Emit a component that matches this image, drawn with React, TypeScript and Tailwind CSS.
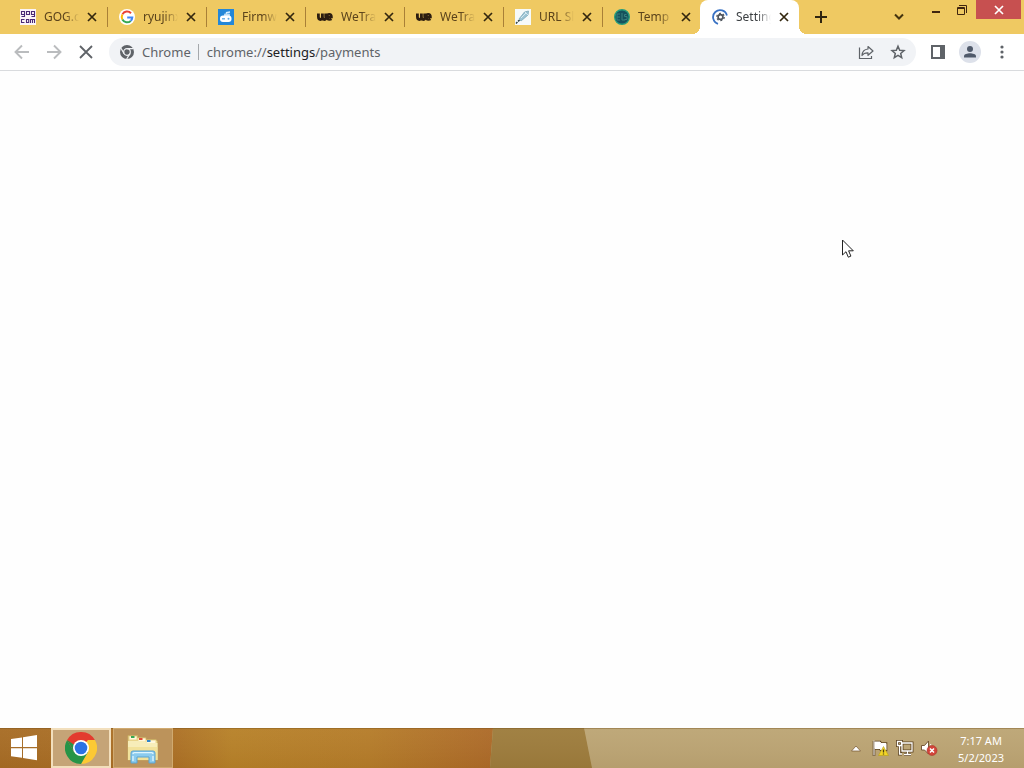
import type { ReactNode } from "react";

function GogIcon() {
  return (
    <svg viewBox="0 0 16 16" className="size-4">
      <rect width="16" height="16" fill="#fbf4f8" />
      <g fill="none" stroke="#4b2a76" strokeWidth="1.100">
        <path d="M4.500 5.500h-3v-3h3v5h-3M6.500 2.500h3v3h-3zM14.500 5.500h-3v-3h3v5h-3" />
        <path d="M4.500 10.500h-3v3h3M6.500 10.500h2.200v3H6.500zM10.500 14v-3.500h4V14M12.500 10.500V14" />
      </g>
    </svg>
  );
}

function GoogleIcon() {
  return (
    <svg viewBox="0 0 16 16" className="size-4">
      <circle cx="8" cy="8" r="8" fill="#fff" />
      <g fill="none" strokeWidth="2">
        <path d="M12 4.200A5.300 5.300 0 0 0 3.400 5.400" stroke="#ea4335" />
        <path d="M3.400 5.400a5.300 5.300 0 0 0 0 5.200" stroke="#fbbc05" />
        <path d="M3.400 10.600a5.300 5.300 0 0 0 8.300 1.300" stroke="#34a853" />
        <path d="M11.700 11.900A5.300 5.300 0 0 0 13.300 8.400H8.200" stroke="#4285f4" />
      </g>
    </svg>
  );
}

function FirmwareIcon() {
  return (
    <svg viewBox="0 0 16 16" className="size-4">
      <rect width="16" height="16" fill="#2487d8" />
      <path d="M8.500 5V3.500L12 3" stroke="#d7efff" strokeWidth="1.300" fill="none" />
      <rect x="6" y="4.500" width="6" height="3" rx="1" fill="#b9dcf5" />
      <rect x="2" y="6.500" width="11.500" height="6.500" rx="3" fill="#fff" />
      <path d="M4 9.800h3" stroke="#5aa8e4" strokeWidth="1.300" />
      <circle cx="10.500" cy="9.800" r="1" fill="#5aa8e4" />
    </svg>
  );
}

function WeIcon() {
  return (
    <svg viewBox="0 0 16 16" className="size-4" fill="none" stroke="#2c1d10" strokeWidth="2.800">
      <path d="M1.400 4.500v3q0 3 2 3t2-3v-3M5.400 7.500q0 3 2 3t1.300-3v-3" />
      <path d="M10.300 8h4.300q0-2.800-2.300-2.800-2.500 0-2.500 2.800 0 2.600 2.700 2.600 1.200 0 2-.600" strokeWidth="2.300" />
    </svg>
  );
}

function LinkIcon() {
  return (
    <svg viewBox="0 0 16 16" className="size-4">
      <rect width="16" height="16" fill="#f6fafa" />
      <path d="M1 14.500 5 10.500" stroke="#293b3d" strokeWidth="1.500" strokeDasharray="2 1" />
      <path d="m4 10 2 2 7-6 .5-4-4 1z" fill="#9cc4d4" stroke="#7ba8b9" strokeWidth=".8" />
      <path d="m6 9 5-5M10 3l3 3" stroke="#d5e9f0" />
    </svg>
  );
}

function TempIcon() {
  return (
    <svg viewBox="0 0 16 16" className="size-4">
      <circle cx="8" cy="8" r="7.300" fill="#16525d" stroke="#269c7d" strokeWidth="1.400" />
      <path d="M6 5H3v6h3M3 8h3M8 4v7h3M12.500 5.500H10.500v2h2.500v3h-2.500" fill="none" stroke="#38817f" />
    </svg>
  );
}

function LoadingSettingsIcon() {
  return (
    <svg viewBox="0 0 16 16" className="size-4" fill="none">
      <path d="M6 14.800A7 7 0 1 1 14.900 6.500" stroke="#3972c4" strokeWidth="1.800" />
      <circle cx="8.500" cy="8" r="2.400" stroke="#50565e" strokeWidth="1.700" />
      <circle cx="8.500" cy="8" r="3.700" stroke="#50565e" strokeWidth="1.300" strokeDasharray="1.937 1.937" />
    </svg>
  );
}

function Cross({ className }: { className: string }) {
  return (
    <svg viewBox="0 0 16 16" className={className} fill="none" stroke="currentColor">
      <path d="m4 4 8 8M12 4l-8 8" />
    </svg>
  );
}

type TabInfo = { title: string; icon: ReactNode; active?: boolean };

const tabs: TabInfo[] = [
  { title: "GOG.c", icon: <GogIcon /> },
  { title: "ryujinx", icon: <GoogleIcon /> },
  { title: "Firmw", icon: <FirmwareIcon /> },
  { title: "WeTra", icon: <WeIcon /> },
  { title: "WeTra", icon: <WeIcon /> },
  { title: "URL Sl", icon: <LinkIcon /> },
  { title: "Temp", icon: <TempIcon /> },
  { title: "Setting", icon: <LoadingSettingsIcon />, active: true },
];

function Tab({ title, icon, active }: TabInfo) {
  return (
    <div
      className={
        active
          ? "relative -ml-px flex h-full w-[99px] items-center rounded-t-lg bg-white pl-3 text-[#3c4043]"
          : "relative flex h-full w-[99px] items-center pl-3 text-[#5b431b]"
      }
    >
      {active && (
        <>
          <span className="absolute bottom-0 -left-2 size-2 bg-[radial-gradient(circle_at_0_0,transparent_8px,white_8px)]" />
          <span className="absolute -right-2 bottom-0 size-2 bg-[radial-gradient(circle_at_100%_0,transparent_8px,white_8px)]" />
        </>
      )}
      <button className="flex items-center gap-2">
        {icon}
        <span className="w-[35px] text-left text-xs whitespace-nowrap mask-[linear-gradient(to_right,black_60%,transparent)]">
          {title}
        </span>
      </button>
      <button aria-label={"Close " + title} className="ml-[5px] text-[#33270f]">
        <Cross className="size-4 stroke-[1.7]" />
      </button>
      {!active && title !== "Temp" && <span className="absolute -right-px h-5 w-px bg-[#a98037]" />}
    </div>
  );
}

function TabStrip() {
  return (
    <header className="flex h-[34px] items-center justify-between bg-[#efc962]">
      <div className="flex h-full items-center pl-2">
        {tabs.map((tab, i) => (
          <Tab key={i} {...tab} />
        ))}
        <button aria-label="New tab" className="ml-3.5 text-[#302510]">
          <svg viewBox="0 0 16 16" className="size-4" stroke="currentColor" strokeWidth="2">
            <path d="M8 2v12M2 8h12" />
          </svg>
        </button>
      </div>
      <div className="flex h-full items-start">
        <button aria-label="Search tabs" className="mt-2 mr-4 text-[#44340f]">
          <svg viewBox="0 0 16 16" className="size-4" fill="none" stroke="currentColor" strokeWidth="2">
            <path d="m4 6.500 4 4 4-4" />
          </svg>
        </button>
        <button aria-label="Minimize" className="flex h-[19px] w-[26px] items-center justify-center text-[#40250f]">
          <svg viewBox="0 0 16 16" className="size-4">
            <path d="M4 9h8v2H4z" fill="currentColor" />
          </svg>
        </button>
        <button aria-label="Restore" className="mr-px flex h-[19px] w-[26px] items-center justify-center text-[#40250f]">
          <svg viewBox="0 0 16 16" className="size-4" fill="none" stroke="currentColor">
            <path d="M3.500 5.500h7v7h-7zM3 6.500h8M5 3.500h7.500V11" />
          </svg>
        </button>
        <button aria-label="Close window" className="mr-[3px] flex h-[19px] w-[45px] items-center justify-center bg-[#c75050] text-white">
          <Cross className="size-4 stroke-[1.7]" />
        </button>
      </div>
    </header>
  );
}

function ArrowIcon({ className }: { className: string }) {
  return (
    <svg viewBox="0 0 16 16" className={className} fill="none" stroke="currentColor" strokeWidth="1.900">
      <path d="M15 8H2M8 1.500 1.500 8 8 14.500" />
    </svg>
  );
}

function Toolbar() {
  return (
    <nav className="flex h-[37px] items-center border-b border-[#d9dbde] bg-white pr-3.5 pl-3.5 text-[#5f6368]">
      <div className="flex w-[95px] items-center gap-4">
        <button aria-label="Back" className="text-[#babcbe]">
          <ArrowIcon className="size-4" />
        </button>
        <button aria-label="Forward" className="text-[#babcbe]">
          <ArrowIcon className="size-4 rotate-180" />
        </button>
        <button aria-label="Stop loading">
          <svg viewBox="0 0 16 16" className="size-4" stroke="currentColor" strokeWidth="1.800">
            <path d="m2 2 12 12M14 2 2 14" />
          </svg>
        </button>
      </div>
      <div className="flex h-7 flex-1 items-center rounded-full bg-[#f1f3f6] px-2.5">
        <svg viewBox="0 0 16 16" className="size-4 shrink-0">
          <circle cx="8" cy="8" r="7" fill="#5f6368" />
          <circle cx="8" cy="8" r="3.300" fill="none" stroke="#f1f3f6" strokeWidth="1.200" />
          <path d="M8 4.700h6.300M5.100 9.600 2 4.300M10.900 9.600 7.700 15" stroke="#f1f3f6" strokeWidth="1.200" />
        </svg>
        <span className="ml-[7px] pt-px text-[13px]">Chrome</span>
        <span className="mr-2 ml-[7px] h-4 w-px bg-[#a5a8ac]" />
        <div role="textbox" aria-label="Address" className="flex-1 pt-px text-[13px] whitespace-nowrap">
          chrome://<span className="text-[#202124]">settings</span>/payments
        </div>
        <button aria-label="Share this page" className="mr-4">
          <svg viewBox="0 0 16 16" className="size-4" fill="none" stroke="currentColor" strokeWidth="1.200">
            <path d="M1.500 3.500v11h12V12" />
            <path d="M10 2.500 15 7l-5 4.300V8.800Q6 8.600 4 11.500 4.300 5.500 10 5z" strokeLinejoin="round" />
          </svg>
        </button>
        <button aria-label="Bookmark this tab">
          <svg viewBox="0 0 16 16" className="size-4" fill="none" stroke="currentColor" strokeWidth="1.500">
            <path d="m8 2.200 1.700 4 4.300.400-3.300 2.800 1 4.200L8 11.400l-3.700 2.200 1-4.200L2 6.600l4.300-.400z" />
          </svg>
        </button>
      </div>
      <button aria-label="Side panel" className="ml-3.5">
        <svg viewBox="0 0 16 16" className="size-4">
          <path d="M1 1h14v14H1zM3 3v10h7V3z" fill="currentColor" fillRule="evenodd" />
        </svg>
      </button>
      <button aria-label="Profile" className="ml-[13px] flex size-[22px] items-center justify-center rounded-full bg-[#dde1ea] text-[#505a6b]">
        <svg viewBox="0 0 16 16" className="size-4" fill="currentColor">
          <circle cx="8" cy="5" r="3" />
          <path d="M2 13.500v-1.300C2 10.200 5.500 9.300 8 9.300s6 .9 6 2.900v1.300z" />
        </svg>
      </button>
      <button aria-label="Menu" className="ml-[13px]">
        <svg viewBox="0 0 16 16" className="size-4" fill="currentColor">
          <circle cx="8" cy="3" r="1.600" />
          <circle cx="8" cy="8" r="1.600" />
          <circle cx="8" cy="13" r="1.600" />
        </svg>
      </button>
    </nav>
  );
}

function ChromeLogo() {
  return (
    <svg viewBox="0 0 32 32" className="size-8">
      <path d="M16 16 2.140 8A16 16 0 0 1 29.860 8z" fill="#e33b2e" />
      <path d="M16 8h13.860A16 16 0 0 1 16 32l6.930-12z" fill="#fcc934" />
      <path d="M2.140 8A16 16 0 0 0 16 32l6.930-12H9.070z" fill="#269447" />
      <path d="M2.140 8 9.070 20 16 16l6.930-8z" fill="#e33b2e" />
      <path d="M2.140 8 9.070 20 13 22l-2-8z" fill="#269447" />
      <circle cx="16" cy="16" r="8" fill="#fff" />
      <circle cx="16" cy="16" r="6.300" fill="#2c72e5" />
    </svg>
  );
}

function FolderLogo() {
  return (
    <svg viewBox="0 0 34 32" className="h-8 w-[34px]">
      <path d="M2 5V3.500h9.500v2H20v2h10l1.500 2V28H2z" fill="#ead58c" stroke="#c8ad62" strokeWidth=".8" />
      <path d="M3.500 4.500h7v3h-7zM12.500 6.500h7v3h-7zM20.500 8.500h9v3h-9z" fill="#fff8dc" />
      <path d="M5 4h3.500v2H5z" fill="#35a853" />
      <path d="M13 6h3.500v2H13z" fill="#e24a36" />
      <path d="M21 8h3.500v2H21z" fill="#3186c9" />
      <path d="M2 9h17l1.500 2h11v17H2z" fill="#f7edb9" />
      <path d="M2 15h29.500v13H2z" fill="#efdd8e" opacity=".7" />
      <path d="M5 31V21q0-2 2-2h20q2 0 2 2v10h-6v-6H11v6z" fill="#8bcbee" stroke="#5ba4d1" strokeWidth="1" />
      <path d="M7 22q0-1.300 1.500-1.300h17Q27 20.700 27 22M7 24v5M27 24v5" fill="none" stroke="#dff6ff" strokeWidth="1.300" />
    </svg>
  );
}

function TrayIcons() {
  return (
    <div className="flex items-center">
      <button aria-label="Show hidden icons">
        <svg viewBox="0 0 16 16" className="size-4">
          <path d="m3.500 11 4.500-5 4.500 5z" fill="#fff" stroke="#72552f" strokeWidth=".7" />
        </svg>
      </button>
      <button aria-label="Action Center" className="ml-2">
        <svg viewBox="0 0 18 18" className="size-[18px]">
          <path d="M2 2v15M3 3h5l1 1.500h5V11H9L8 9.500H3z" fill="#fff" stroke="#5f4522" strokeWidth="2.600" />
          <path d="M2 1.500v15M3 3h5l1 1.500h5V11H9L8 9.500H3z" fill="#fff" stroke="#fff" />
          <path d="m11.500 7.500 5 9h-10z" fill="#f3d526" stroke="#b59d19" strokeWidth=".6" />
          <path d="M11.500 10.500v3M11.500 14.500v1" stroke="#4b3e10" strokeWidth="1.300" />
        </svg>
      </button>
      <button aria-label="Network" className="ml-1.5">
        <svg viewBox="0 0 18 18" className="size-[18px]" fill="none">
          <g stroke="#5f4522" strokeWidth="3">
            <path d="M6 4h10v8H6zM8 15.500h7M11.500 12v3M3.500 7v8H6M1.500 2.500h4v4h-4z" />
          </g>
          <g stroke="#fff" strokeWidth="1.300">
            <path d="M6 4h10v8H6zM8 15.500h7M11.500 12v3M3.500 7v8H6M1.500 2.500h4v4h-4z" />
          </g>
        </svg>
      </button>
      <button aria-label="Volume muted" className="ml-1.5">
        <svg viewBox="0 0 18 18" className="size-[18px]">
          <path d="M1.500 6.500h3L8.500 2v13l-4-4h-3z" fill="#fff" stroke="#6a4c2c" strokeWidth=".9" />
          <path d="M10.500 5q2 3 0 7" fill="none" stroke="#fff" />
          <circle cx="12" cy="11.500" r="5" fill="#d2443a" stroke="#a93528" strokeWidth=".6" />
          <path d="m10 9.500 4 4M14 9.500l-4 4" stroke="#fff" strokeWidth="1.500" />
        </svg>
      </button>
    </div>
  );
}

function Taskbar() {
  return (
    <footer className="relative flex h-10 items-center justify-between bg-[#bca574]">
      <svg viewBox="0 0 1024 40" preserveAspectRatio="none" className="absolute inset-0 size-full" aria-hidden="true">
        <defs>
          <linearGradient id="amber">
            <stop offset="0" stopColor="#a76c24" />
            <stop offset=".35" stopColor="#ac7025" />
            <stop offset=".47" stopColor="#b78128" />
            <stop offset=".75" stopColor="#b57c29" />
            <stop offset="1" stopColor="#ad6a28" />
          </linearGradient>
          <linearGradient id="shade" x2="0" y2="1">
            <stop offset="0" stopColor="#fff" stopOpacity=".04" />
            <stop offset="1" stopColor="#4d290b" stopOpacity=".06" />
          </linearGradient>
        </defs>
        <path d="M0 0h493l-3 40H0z" fill="url(#amber)" />
        <path d="M493 0h91l8 40H490z" fill="#9d7c3c" />
        <path d="M0 0h1024v40H0z" fill="url(#shade)" />
        <path d="M0 0h1024v1H0z" fill="#6f4a18" opacity=".35" />
      </svg>
      <div className="relative flex h-full items-center">
        <button aria-label="Start" className="flex h-full w-[51px] items-center pl-2.5">
          <svg viewBox="0 0 28 28" className="size-7" fill="#fff">
            <path d="M1 5l11-1.500V13H1zM13 3.300 27 1v12H13zM1 14.200h11v9.500L1 22.200zM13 14.200h14v12L13 24z" />
          </svg>
        </button>
        <button aria-label="Google Chrome" className="flex h-full w-[60px] items-center justify-center border-2 border-[#f2dfbd] bg-[#c5a477]">
          <ChromeLogo />
        </button>
        <button aria-label="File Explorer" className="ml-0.5 flex h-full w-[60px] items-center justify-center border border-[#d0aa70] bg-[#bc935b]">
          <FolderLogo />
        </button>
      </div>
      <div className="relative flex h-full items-center pr-5">
        <TrayIcons />
        <button className="ml-5 pt-0.5 text-center text-[11px] leading-[17px] text-white">
          <span className="block">7:17 AM</span>
          <span className="block">5/2/2023</span>
        </button>
      </div>
    </footer>
  );
}

export default function App() {
  return (
    <div className="flex min-h-screen flex-col overflow-hidden bg-white font-['Noto_Sans','Open_Sans',sans-serif]">
      <TabStrip />
      <Toolbar />
      <main className="relative flex-1 bg-[#fefefe]">
        <svg viewBox="0 0 12 20" className="absolute top-[168px] left-[842px] h-5 w-3" aria-hidden="true">
          <path d="M.5 1v15l3.500-3.300 2.300 5.500 2.600-1.100-2.300-5.300h4.700z" fill="#fff" stroke="#222" />
        </svg>
      </main>
      <Taskbar />
    </div>
  );
}
